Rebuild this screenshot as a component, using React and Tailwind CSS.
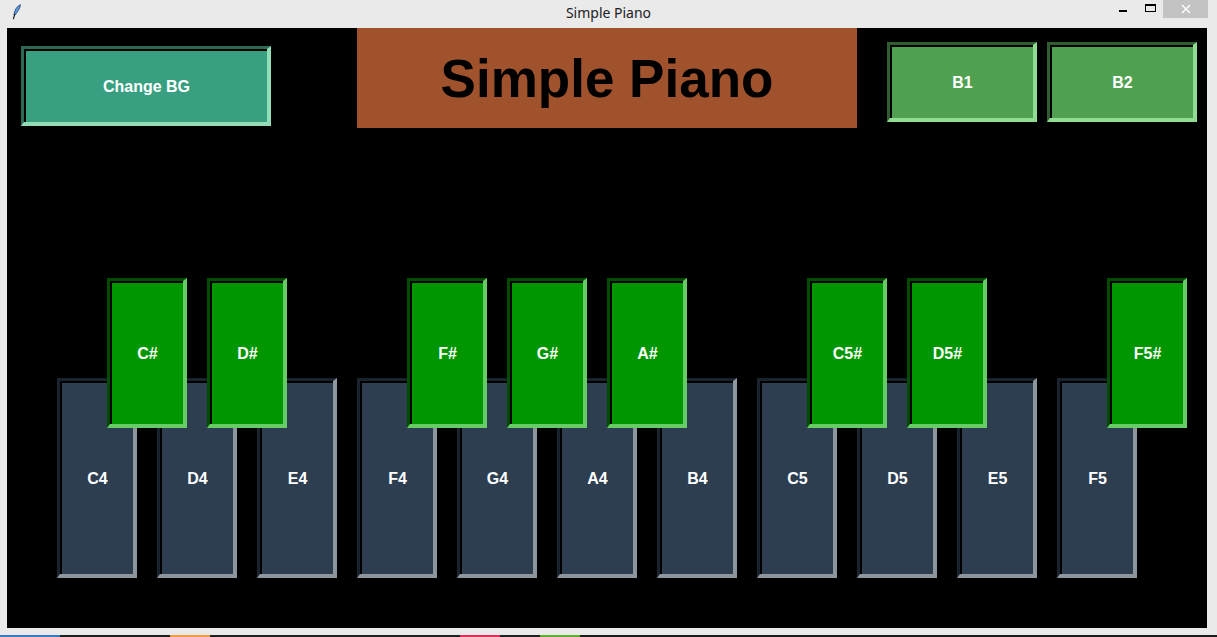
import React from 'react';

// key rows for the canvas: naturals in one flow row, sharps laid over them
const whiteKeys = ['C4', 'D4', 'E4', 'F4', 'G4', 'A4', 'B4', 'C5', 'D5', 'E5', 'F5'];
// one slot between each pair of naturals, null where there is no sharp
const blackSlots = ['C#', 'D#', null, 'F#', 'G#', 'A#', null, 'C5#', 'D5#', null, 'F5#'];

const font = { fontFamily: '"Liberation Sans", Arial, sans-serif' };

// Tk-style bevelled button: dark top/left with a black inner line, light bottom/right
function Bevel({ className, fill, children }) {
  return (
    <div className={`border-t-[3px] border-l-[3px] border-b-4 border-r-4 ${className}`}>
      <div className={`h-full w-full border-t-2 border-l-2 border-black flex items-center justify-center text-white font-bold text-[16px] ${fill}`}>
        {children}
      </div>
    </div>
  );
}

function TitleBar() {
  return (
    <div className="relative h-[28px] flex items-center">
      <svg className="absolute left-[12px] top-[4px]" width="10" height="16" viewBox="0 0 10 16">
        <path d="M8.5 0.8 C5 2 2.5 6 2 11 L3.2 11 C5 8 8 5 8.5 0.8 Z" fill="#5b9bdc" stroke="#1d3b66" strokeWidth="0.8" />
        <path d="M2.6 10.5 L1.4 15.2" stroke="#111" strokeWidth="1.1" />
      </svg>
      <div className="flex-1 text-center text-[14px] text-[#222] -mt-[3px]" style={{ fontFamily: '"Noto Sans", "Liberation Sans", sans-serif' }}>
        Simple Piano
      </div>
      <div className="absolute right-[9px] top-0 flex items-start">
        <div className="w-[8px] h-[2px] bg-black mt-[10px] mr-[18px]" />
        <div className="w-[11px] h-[8px] border border-t-2 border-black mt-[4px] mr-[7px]" />
        <div className="w-[45px] h-[18px] bg-[#c3c3c3] flex items-center justify-center">
          <svg width="10" height="10" viewBox="0 0 10 10">
            <path d="M1 1 L9 9 M9 1 L1 9" stroke="#fff" strokeWidth="1.4" />
          </svg>
        </div>
      </div>
    </div>
  );
}

export default function App() {
  return (
    <div className="w-[1217px] h-[637px] bg-[#eaeaea] flex flex-col overflow-hidden" style={font}>
      <TitleBar />
      <div className="flex pl-[7px]">
        <div className="w-[1200px] h-[600px] bg-black">
          {/* top row: buttons and heading */}
          <div className="flex items-start h-[100px]">
            <Bevel className="ml-[14px] mt-[18px] w-[250px] h-[80px] border-t-[#2c6a56] border-l-[#2c6a56] border-b-[#93dcb8] border-r-[#93dcb8]" fill="bg-[#389f80]">
              Change BG
            </Bevel>
            <div className="ml-[86px] w-[500px] h-[100px] bg-[#a0522d] flex items-center justify-center">
              <span className="text-[53px] font-bold text-black leading-none">Simple Piano</span>
            </div>
            <Bevel className="ml-[30px] mt-[14px] w-[150px] h-[80px] border-t-[#2f5f30] border-l-[#2f5f30] border-b-[#90dc90] border-r-[#90dc90]" fill="bg-[#4fa050]">
              B1
            </Bevel>
            <Bevel className="ml-[10px] mt-[14px] w-[150px] h-[80px] border-t-[#2f5f30] border-l-[#2f5f30] border-b-[#90dc90] border-r-[#90dc90]" fill="bg-[#4fa050]">
              B2
            </Bevel>
          </div>

          {/* keyboard */}
          <div className="relative mt-[250px] ml-[50px] flex gap-[20px]">
            {whiteKeys.map(k => (
              <Bevel key={k} className="w-[80px] h-[200px] border-t-[#1a242e] border-l-[#1a242e] border-b-[#8d959f] border-r-[#8d959f]" fill="bg-[#2c3e50]">
                {k}
              </Bevel>
            ))}
            <div className="absolute left-[50px] top-[-100px] flex gap-[20px]">
              {blackSlots.map((k, i) =>
                k ? (
                  <Bevel key={k} className="w-[80px] h-[150px] border-t-[#004d00] border-l-[#004d00] border-b-[#66cc66] border-r-[#66cc66]" fill="bg-[#009600]">
                    {k}
                  </Bevel>
                ) : (
                  <div key={'gap' + i} className="w-[80px] h-[150px]" />
                )
              )}
            </div>
          </div>
        </div>
      </div>
      <div className="mt-[7px] h-[2px] flex">
        <div className="w-[60px] bg-[#3a78c8]" />
        <div className="w-[110px] bg-[#1e1e1e]" />
        <div className="w-[40px] bg-[#e8a040]" />
        <div className="w-[250px] bg-[#202020]" />
        <div className="w-[40px] bg-[#e0305a]" />
        <div className="w-[40px] bg-[#202020]" />
        <div className="w-[40px] bg-[#60b030]" />
        <div className="flex-1 bg-[#1a1a1a]" />
      </div>
    </div>
  );
}
